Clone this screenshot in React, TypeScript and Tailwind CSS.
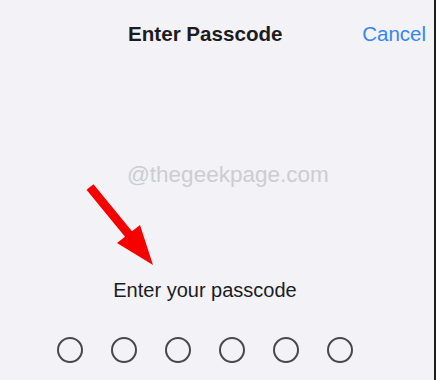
export default function App() {
  const dots = [0, 1, 2, 3, 4, 5];

  return (
    <div className="relative w-[436px] h-[380px] overflow-hidden bg-[#f2f2f7] border-r-2 border-[#1c1c1c] font-['Liberation_Sans',Arial,sans-serif]">
      {/* header */}
      <div className="flex items-baseline pt-[22px] pl-[128px] pr-[8px]">
        <div className="text-[20.6px] leading-[24px] font-bold text-[#1c1c1e]">Enter Passcode</div>
        <button className="ml-auto text-[20.5px] leading-[24px] text-[#3485f7]">Cancel</button>
      </div>

      {/* watermark */}
      <div className="mt-[116px] pl-[127px] text-[22.5px] leading-[26px] text-[#cdcdd1]">@thegeekpage.com</div>

      <div className="w-[410px] flex flex-col items-center">
        <div className="mt-[90px] text-[20px] leading-[24px] text-[#1c1c1e]">Enter your passcode</div>
        <div className="mt-[35px] flex gap-[28px]">
          {dots.map((d) => (
            <div key={d} className="w-[26px] h-[26px] rounded-full border-2 border-[#48484a]" />
          ))}
        </div>
      </div>

      {/* annotation arrow */}
      <svg className="absolute inset-0 pointer-events-none" width="436" height="380" viewBox="0 0 436 380">
        <polygon
          points="93.5,184.2 132,231.2 140,225 153,265 117,243 125,236.8 86.5,189.8"
          fill="#f60000"
        />
      </svg>
    </div>
  );
}
